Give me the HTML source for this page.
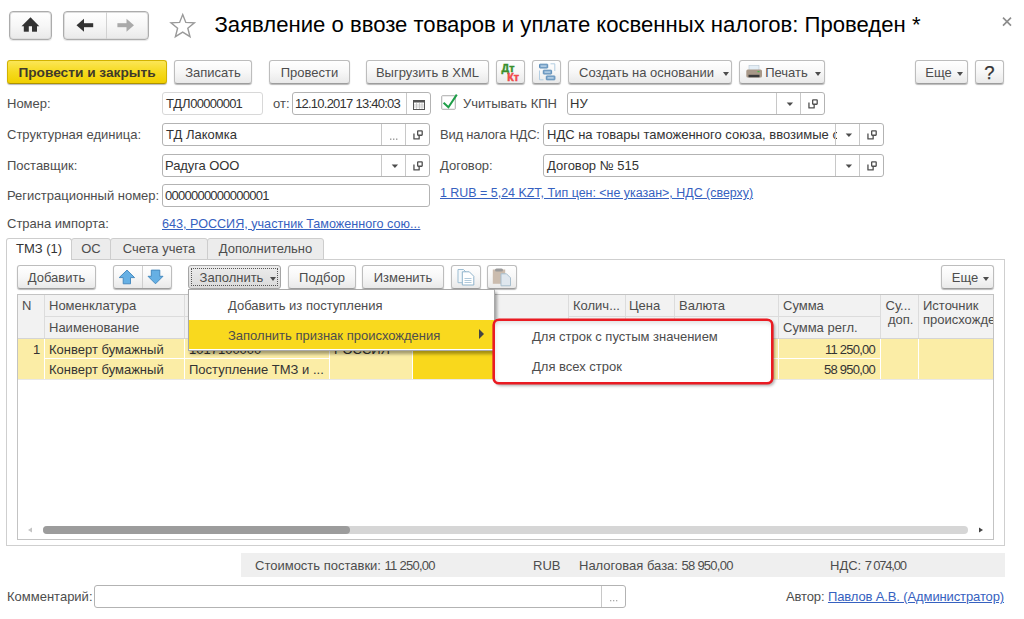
<!DOCTYPE html>
<html><head><meta charset="utf-8">
<style>
*{box-sizing:border-box;margin:0;padding:0}
html,body{width:1024px;height:619px;overflow:hidden;background:#fff;font-family:"Liberation Sans",sans-serif;font-size:13px;color:#4d4d4d;position:relative}
.a{position:absolute;white-space:nowrap}
svg{position:absolute;overflow:visible}
.btn{position:absolute;height:24px;border:1px solid #bdbdbd;border-bottom-color:#9d9d9d;border-radius:3px;background:linear-gradient(#ffffff 0%,#f7f7f7 50%,#e9e9e9 100%);box-shadow:0 1px 1px rgba(0,0,0,.28);color:#4d4d4d;text-align:center;line-height:22px;padding-top:1px;white-space:nowrap}
.fld{position:absolute;height:23px;border:1px solid #b3b3b3;border-radius:3px;background:#fff;color:#333;line-height:21px;padding-left:3px;white-space:nowrap;overflow:hidden}
.lbl{position:absolute;color:#4d4d4d;white-space:nowrap;line-height:16px}
.v{color:#333}
.d{letter-spacing:-0.75px}
.lnk{color:#3661c0;text-decoration:underline}
.sep{position:absolute;top:0;bottom:0;width:1px;background:#c8c8c8}
.dd{position:absolute;width:0;height:0;border-left:3.5px solid transparent;border-right:3.5px solid transparent;border-top:4px solid #4d4d4d}
.tab{position:absolute;height:21px;border:1px solid #cdcdcd;border-radius:3px 3px 0 0;background:#ececec;color:#4d4d4d;text-align:center;line-height:19px;white-space:nowrap}
.hc{position:absolute;background:#dcdcdc}
.wl{position:absolute;background:#fff}
</style></head><body>

<!-- ===== title bar ===== -->
<div class="btn" style="left:9px;top:11px;width:43px;height:29px;border-radius:4px;border-color:#acacac;box-shadow:inset 0 0 0 1px #dedede,0 1px 1px rgba(0,0,0,.1)"></div>
<svg style="left:0;top:0" width="60" height="45"><path d="M21.5 26.3 L30.5 17.3 L39.3 26.3 Z" fill="#333"/><rect x="23.8" y="25.5" width="5" height="6.2" fill="#333"/><rect x="32" y="25.5" width="5" height="6.2" fill="#333"/></svg>
<div class="btn" style="left:63px;top:11px;width:86px;height:29px;border-radius:4px;border-color:#acacac;box-shadow:inset 0 0 0 1px #dedede,0 1px 1px rgba(0,0,0,.1)"><div class="sep" style="left:42px;background:#d2d2d2"></div></div>
<svg style="left:0;top:0" width="160" height="45"><path d="M76.5 25.2 L84 18.7 L84 31.7 Z" fill="#333"/><rect x="82" y="23.2" width="11.2" height="4" fill="#333"/><path d="M134 25.2 L126.5 18.7 L126.5 31.7 Z" fill="#aaa"/><rect x="117.4" y="23.2" width="11" height="4" fill="#aaa"/></svg>
<svg style="left:0;top:0" width="200" height="45"><path d="M182.7 14.6 L185.8 22.4 L194.4 22.9 L187.8 28.3 L190 36.7 L182.7 32.1 L175.4 36.7 L177.6 28.3 L171 22.9 L179.6 22.4 Z" fill="#fff" stroke="#9a9a9a" stroke-width="1.4" stroke-linejoin="miter"/></svg>
<div class="a" style="left:214.5px;top:9.5px;font-size:22.1px;color:#000;line-height:30px">Заявление о ввозе товаров и уплате косвенных налогов: Проведен *</div>
<svg style="left:0;top:0" width="1024" height="45"><path d="M1003 17.6 L1011 25.6 M1011 17.6 L1003 25.6" stroke="#8c8c8c" stroke-width="1.6"/></svg>

<!-- ===== toolbar ===== -->
<div class="btn" style="left:7px;top:60px;width:160px;background:linear-gradient(#fbe657 0%,#f6da1f 50%,#f0cf00 100%);border-color:#d2b300;border-bottom-color:#ad9200;color:#3f3a2a;font-weight:bold;font-size:13.7px">Провести и закрыть</div>
<div class="btn" style="left:174px;top:60px;width:78px">Записать</div>
<div class="btn" style="left:269px;top:60px;width:81px">Провести</div>
<div class="btn" style="left:366px;top:60px;width:123px">Выгрузить в XML</div>
<div class="btn" style="left:496px;top:60px;width:29px"></div>
<svg style="left:0;top:0" width="600" height="90"><text x="501.6" y="72" font-family="Liberation Sans" font-weight="bold" font-size="11" fill="#3a8f2c" stroke="#3a8f2c" stroke-width=".5" textLength="12.8" lengthAdjust="spacingAndGlyphs">Дт</text><text x="507.3" y="80.5" font-family="Liberation Sans" font-weight="bold" font-size="10.5" fill="#f04a4a" stroke="#f04a4a" stroke-width=".5" textLength="11.8" lengthAdjust="spacingAndGlyphs">Кт</text></svg>
<div class="btn" style="left:532px;top:60px;width:29px"></div>
<svg style="left:0;top:0" width="600" height="90"><path d="M539.5 70.5 V79.8 H543.5 M554.8 71 V63.8 H550.5" fill="none" stroke="#b3cde2" stroke-width="1"/><g fill="#88aed0" stroke="#5c8db8" stroke-width="1"><rect x="539.5" y="64.2" width="8.2" height="3.8" rx=".5"/><rect x="543.3" y="70.2" width="8.3" height="3.8" rx=".5"/><rect x="546.3" y="76" width="8.6" height="3.8" rx=".5"/></g><path d="M541 66.1 h5.2 M544.8 72.1 h5.3 M547.8 77.9 h5.6" stroke="#d0e2f0" stroke-width=".9"/></svg>
<div class="btn" style="left:568px;top:60px;width:164px;padding-left:3px;padding-right:10px">Создать на основании<div class="dd" style="left:154px;top:11px"></div></div>
<div class="btn" style="left:739px;top:60px;width:86px;padding-left:19px;padding-right:10px">Печать<div class="dd" style="left:75px;top:11px"></div></div>
<svg style="left:0;top:0" width="800" height="90"><rect x="749" y="65.5" width="10" height="5" fill="#e4eef6" stroke="#b8c6d2" stroke-width=".6"/><rect x="746.3" y="69.5" width="15.7" height="8" rx="1.5" fill="#a89888"/><rect x="748.5" y="74.8" width="11" height="2.5" fill="#3a3a3a"/><rect x="757.5" y="71" width="2" height="1.2" fill="#48b848"/></svg>
<div class="btn" style="left:915px;top:60px;width:53px;padding-left:4px;padding-right:10px">Еще<div class="dd" style="left:41px;top:11px;border-left-width:3.8px;border-right-width:3.8px"></div></div>
<div class="btn" style="left:975px;top:60px;width:29px;font-size:18.5px;color:#333;-webkit-text-stroke:0.25px #333">?</div>

<!-- ===== form rows ===== -->
<div class="lbl" style="left:7px;top:96px;">Номер:</div>
<div class="fld" style="left:162px;top:92px;width:101px;height:23px;border-color:#d8d8d8"><span style="letter-spacing:-0.2px">ТДЛ</span><span class="d">00000001</span></div>
<div class="lbl" style="left:273px;top:96px;">от:</div>
<div class="fld" style="left:292px;top:92px;width:139px;height:23px;padding-left:2px"><span class="d">12.10.2017 13:40:03</span><div class="sep" style="left:113px"></div></div>
<div class="a" style="left:441px;top:95px;width:15px;height:15px;border:1px solid #bdbdbd;border-radius:2px;background:#fff;box-shadow:inset 0 0 0 1px #ececec"></div>
<div class="lbl" style="left:463px;top:96px;">Учитывать КПН</div>
<div class="fld" style="left:567px;top:92px;width:258px;height:23px;padding-left:2px">НУ<div class="sep" style="left:208px"></div><div class="sep" style="left:232px"></div></div>
<div class="lbl" style="left:7px;top:127px;">Структурная единица:</div>
<div class="fld" style="left:162px;top:123px;width:268px;height:23px;">ТД Лакомка<div class="sep" style="left:218px"></div><div class="sep" style="left:242px"></div></div>
<div class="lbl" style="left:440px;top:127px;letter-spacing:-0.22px">Вид налога НДС:</div>
<div class="fld" style="left:543px;top:123px;width:341px;height:23px;"><span style="display:inline-block;width:290px;overflow:hidden">НДС на товары таможенного союза, ввозимые с</span><div class="sep" style="left:291px"></div><div class="sep" style="left:315px"></div></div>
<div class="lbl" style="left:7px;top:158px;">Поставщик:</div>
<div class="fld" style="left:162px;top:154px;width:268px;height:23px;padding-left:2px;letter-spacing:-0.1px">Радуга ООО<div class="sep" style="left:218px"></div><div class="sep" style="left:242px"></div></div>
<div class="lbl" style="left:440px;top:158px;">Договор:</div>
<div class="fld" style="left:543px;top:154px;width:341px;height:23px;">Договор № 515<div class="sep" style="left:291px"></div><div class="sep" style="left:315px"></div></div>
<div class="lbl" style="left:7px;top:188px;">Регистрационный номер:</div>
<div class="fld" style="left:162px;top:184px;width:268px;height:23px;padding-left:2px"><span class="d">0000000000000001</span></div>
<div class="lbl lnk" style="left:440px;top:185px;font-size:12.45px">1 RUB = 5,24 KZT, Тип цен: &lt;не указан&gt;, НДС (сверху)</div>
<div class="lbl" style="left:7px;top:216px;">Страна импорта:</div>
<div class="lbl lnk" style="left:162px;top:215.5px;font-size:12.6px">643, РОССИЯ, участник Таможенного сою...</div>
<svg style="left:0;top:0" width="1024" height="220"><rect x="413.5" y="100.5" width="11" height="9" fill="#fff" stroke="#555" stroke-width="1"/><rect x="413.5" y="100.5" width="11" height="2" fill="#555"/><path d="M416.5 103 V109 M419.5 103 V109 M422 103 V109 M414 105 H424 M414 107 H424" stroke="#bbb" stroke-width=".7"/><path d="M443.6 102.8 L448.4 107.3 L456.8 94.6" fill="none" stroke="#1e9e48" stroke-width="2"/><path d="M786.7 102.6 h6.4 l-3.2 3.5 z" fill="#4d4d4d"/><g transform="translate(800.50,91.70)" fill="none" stroke="#505050" stroke-width="1.3" stroke-linejoin="round"><rect x="12.15" y="8.15" width="4.55" height="4.4" rx=".5"/><path d="M8.45 10.85 V16.25 H13.65 V13.2"/></g><g fill="#9a9a9a"><rect x="390.0" y="138.5" width="1.4" height="1.4"/><rect x="393.0" y="138.5" width="1.4" height="1.4"/><rect x="396.0" y="138.5" width="1.4" height="1.4"/></g><g transform="translate(405.50,122.70)" fill="none" stroke="#505050" stroke-width="1.3" stroke-linejoin="round"><rect x="12.15" y="8.15" width="4.55" height="4.4" rx=".5"/><path d="M8.45 10.85 V16.25 H13.65 V13.2"/></g><path d="M845.7 133.6 h6.4 l-3.2 3.5 z" fill="#4d4d4d"/><g transform="translate(859.50,122.70)" fill="none" stroke="#505050" stroke-width="1.3" stroke-linejoin="round"><rect x="12.15" y="8.15" width="4.55" height="4.4" rx=".5"/><path d="M8.45 10.85 V16.25 H13.65 V13.2"/></g><path d="M391.7 164.6 h6.4 l-3.2 3.5 z" fill="#4d4d4d"/><g transform="translate(405.50,153.70)" fill="none" stroke="#505050" stroke-width="1.3" stroke-linejoin="round"><rect x="12.15" y="8.15" width="4.55" height="4.4" rx=".5"/><path d="M8.45 10.85 V16.25 H13.65 V13.2"/></g><path d="M845.7 164.6 h6.4 l-3.2 3.5 z" fill="#4d4d4d"/><g transform="translate(859.50,153.70)" fill="none" stroke="#505050" stroke-width="1.3" stroke-linejoin="round"><rect x="12.15" y="8.15" width="4.55" height="4.4" rx=".5"/><path d="M8.45 10.85 V16.25 H13.65 V13.2"/></g></svg>

<!-- ===== tabs panel ===== -->
<div class="a" style="left:6px;top:259px;width:999px;height:287px;border:1px solid #cfcfcf;background:#fff"></div>
<div class="tab" style="left:71px;top:238px;width:40px;height:22px;line-height:20px">ОС</div>
<div class="tab" style="left:110px;top:238px;width:98px;height:22px;line-height:20px">Счета учета</div>
<div class="tab" style="left:207px;top:238px;width:117px;height:22px;line-height:20px">Дополнительно</div>
<div class="tab" style="left:6px;top:238px;width:66px;height:22px;background:#fff;border-bottom:none;color:#333;line-height:20px">ТМЗ (1)</div>

<!-- ===== TABLE START ===== -->

<!-- table toolbar -->
<div class="btn" style="left:17px;top:265px;width:79px;height:24px">Добавить</div>
<div class="btn" style="left:113px;top:265px;width:59px;height:24px"><div class="sep" style="left:28px;background:#cfcfcf"></div></div>
<svg style="left:0;top:-0.5px" width="200" height="300">
<path d="M127 270.1 L134.6 277.6 L130.5 277.6 L130.5 283.8 L123.2 283.8 L123.2 277.6 L119.2 277.6 Z" fill="#66b0e4" stroke="#3f84bb" stroke-width=".9" stroke-linejoin="round"/>
<path d="M155.5 283.8 L163 276.3 L159.8 276.3 L159.8 270.1 L151.3 270.1 L151.3 276.3 L148 276.3 Z" fill="#66b0e4" stroke="#3f84bb" stroke-width=".9" stroke-linejoin="round"/>
</svg>
<div class="btn" style="left:188px;top:265px;width:93px;height:24px;background:linear-gradient(#ececec,#dadada);border-color:#a5a5a5;box-shadow:none;padding-right:6px"><div style="position:absolute;left:2px;top:2px;right:2px;bottom:2px;border:1px dotted #555"></div>Заполнить<div class="dd" style="left:81px;top:11px"></div></div>
<div class="btn" style="left:288px;top:265px;width:68px;height:24px">Подбор</div>
<div class="btn" style="left:362px;top:265px;width:82px;height:24px">Изменить</div>
<div class="btn" style="left:451px;top:265px;width:30px;height:24px"></div>
<div class="btn" style="left:487px;top:265px;width:30px;height:24px"></div>
<svg style="left:0;top:-0.5px" width="600" height="300">
<path d="M458 269.5 h5.5 l2.5 2.5 v10.7 h-8 z" fill="#f4f8fb" stroke="#9dbdd2" stroke-width="1"/>
<path d="M462.3 271.8 h7 l4.5 4.5 v8.7 h-11.5 z" fill="#fff" stroke="#8fb3cb" stroke-width="1"/>
<path d="M464.5 278.5 h7 M464.5 280.5 h7 M464.5 282.5 h7" stroke="#9dbdd2" stroke-width=".8"/>
<rect x="492.8" y="269.5" width="12.4" height="14.3" fill="#cbbcae"/>
<rect x="495" y="268.5" width="8" height="3" rx="1.5" fill="#9a9a9a"/>
<path d="M501 273.8 h5.5 l4 4 v8 h-9.5 z" fill="#dfe7ee" stroke="#a9bfce" stroke-width="1"/>
</svg>
<div class="btn" style="left:941px;top:265px;width:53px;height:24px;padding-left:3px;padding-right:8px">Еще<div class="dd" style="left:41px;top:11px"></div></div>

<!-- table -->
<div class="a" style="left:17px;top:294px;width:977px;height:246px;border:1px solid #c3c3c3;background:#fff"></div>
<div class="a" style="left:18px;top:295px;width:975px;height:43px;background:#f2f2f2"></div>
<div class="a" style="left:18px;top:338px;width:975px;height:1px;background:#d4d4d4"></div>
<div class="a" style="left:18px;top:339px;width:975px;height:40px;background:#fbeda6"></div>
<div class="a" style="left:413px;top:339px;width:155px;height:40px;background:#f9d81c"></div>
<div class="a" style="left:18px;top:379px;width:975px;height:1px;background:#e8e8e8"></div>

<div class="hc" style="left:44px;top:295px;width:1px;height:43px"></div>
<div class="wl" style="left:44px;top:339px;width:1px;height:40px"></div>
<div class="hc" style="left:184px;top:295px;width:1px;height:43px"></div>
<div class="wl" style="left:184px;top:339px;width:1px;height:40px"></div>
<div class="hc" style="left:329px;top:295px;width:1px;height:43px"></div>
<div class="wl" style="left:329px;top:339px;width:1px;height:40px"></div>
<div class="hc" style="left:412px;top:295px;width:1px;height:43px"></div>
<div class="wl" style="left:412px;top:339px;width:1px;height:40px"></div>
<div class="hc" style="left:568px;top:295px;width:1px;height:43px"></div>
<div class="wl" style="left:568px;top:339px;width:1px;height:40px"></div>
<div class="hc" style="left:625px;top:295px;width:1px;height:43px"></div>
<div class="wl" style="left:625px;top:339px;width:1px;height:40px"></div>
<div class="hc" style="left:674px;top:295px;width:1px;height:43px"></div>
<div class="wl" style="left:674px;top:339px;width:1px;height:40px"></div>
<div class="hc" style="left:778px;top:295px;width:1px;height:43px"></div>
<div class="wl" style="left:778px;top:339px;width:1px;height:40px"></div>
<div class="hc" style="left:880px;top:295px;width:1px;height:43px"></div>
<div class="wl" style="left:880px;top:339px;width:1px;height:40px"></div>
<div class="hc" style="left:918px;top:295px;width:1px;height:43px"></div>
<div class="wl" style="left:918px;top:339px;width:1px;height:40px"></div>
<div class="hc" style="left:45px;top:316px;width:284px;height:1px"></div>
<div class="hc" style="left:568px;top:316px;width:312px;height:1px"></div>
<div class="wl" style="left:45px;top:358px;width:284px;height:1px"></div>
<div class="wl" style="left:568px;top:358px;width:312px;height:1px"></div>
<div class="lbl" style="left:22px;top:298px;">N</div>
<div class="lbl" style="left:49px;top:298px;">Номенклатура</div>
<div class="lbl" style="left:49px;top:320px;">Наименование</div>
<div class="lbl" style="left:573px;top:298px;">Колич...</div>
<div class="lbl" style="left:629px;top:298px;">Цена</div>
<div class="lbl" style="left:679px;top:298px;">Валюта</div>
<div class="lbl" style="left:783px;top:298px;">Сумма</div>
<div class="lbl" style="left:783px;top:320px;">Сумма регл.</div>
<div class="lbl" style="left:885.5px;top:298px;">Су...</div>
<div class="lbl" style="left:888px;top:312px;">доп.</div>
<div class="lbl" style="left:923px;top:298px;">Источник</div>
<div class="lbl" style="left:923px;top:312px;width:70px;overflow:hidden">происхождения</div>
<div class="lbl" style="left:496px;top:314px;">ия</div>
<div class="lbl v" style="left:33px;top:342px;">1</div>
<div class="lbl v" style="left:49px;top:342px;">Конверт бумажный</div>
<div class="lbl v" style="left:189px;top:342px;">1017100000</div>
<div class="lbl v" style="left:334px;top:342px;">РОССИЯ</div>
<div class="lbl v" style="left:49px;top:362px;">Конверт бумажный</div>
<div class="lbl v" style="left:189px;top:362px;">Поступление ТМЗ и ...</div>
<div class="lbl v" style="left:778px;top:342px;width:97px;text-align:right"><span class="d">11 250,00</span></div>
<div class="lbl v" style="left:778px;top:362px;width:97px;text-align:right"><span class="d">58 950,00</span></div>

<div class="a" style="left:43px;top:526px;width:925px;height:8px;border-radius:4px;background:#d6d6d6"></div>
<div class="a" style="left:43px;top:526px;width:307px;height:8px;border-radius:4px;background:#9c9c9c"></div>
<svg style="left:0;top:0" width="1024" height="540"><path d="M28 530 L32 527.5 L32 532.5 Z" fill="#c4c4c4"/><path d="M983 530 L979 527.5 L979 532.5 Z" fill="#444"/></svg>


<!-- dropdown menu -->
<div class="a" style="left:188px;top:289px;width:307px;height:62px;background:#fff;border:1px solid #a9a9a9;box-shadow:2px 3px 3px rgba(0,0,0,.35)"></div>
<div class="a" style="left:189px;top:320px;width:305px;height:29px;background:#f9d91e"></div>
<div class="lbl" style="left:228px;top:298px">Добавить из поступления</div>
<div class="lbl" style="left:228px;top:327.5px">Заполнить признак происхождения</div>
<svg style="left:0;top:0" width="600" height="400"><path d="M479 329 L484 334 L479 339 Z" fill="#444"/></svg>
<!-- submenu -->
<div class="a" style="left:493px;top:319px;width:280px;height:65px;background:#fff;border:2px solid #ea1b22;border-radius:6px;box-shadow:0 0 0 .6px #ea1b22,2px 2px 3px rgba(0,0,0,.3),inset 0 5px 5px -3px rgba(0,0,0,.13),inset 4px 0 4px -3px rgba(0,0,0,.08)"></div>
<div class="lbl" style="left:532px;top:328.5px">Для строк с пустым значением</div>
<div class="lbl" style="left:532px;top:358.5px">Для всех строк</div>


<!-- footer -->
<div class="a" style="left:241px;top:553px;width:764px;height:24px;background:#efefef"></div>
<div class="lbl" style="left:255px;top:558px;">Стоимость поставки: <span class="d">11 250,00</span></div>
<div class="lbl" style="left:533px;top:558px;">RUB</div>
<div class="lbl" style="left:579px;top:558px;">Налоговая база: <span class="d">58 950,00</span></div>
<div class="lbl" style="left:830px;top:558px;">НДС: <span class="d" style="letter-spacing:-1.2px">7 074,00</span></div>
<div class="lbl" style="left:7px;top:589px">Комментарий:</div>
<div class="fld" style="left:94px;top:585px;width:532px;height:23px"><div class="sep" style="left:506px"></div></div>
<svg style="left:0;top:0" width="700" height="619"><g fill="#aaa"><rect x="610" y="600" width="1.3" height="1.3"/><rect x="613" y="600" width="1.3" height="1.3"/><rect x="616" y="600" width="1.3" height="1.3"/></g></svg>
<div class="lbl" style="left:786px;top:589px;letter-spacing:-0.12px">Автор: <span class="lnk">Павлов А.В. (Администратор)</span></div>

</body></html>
